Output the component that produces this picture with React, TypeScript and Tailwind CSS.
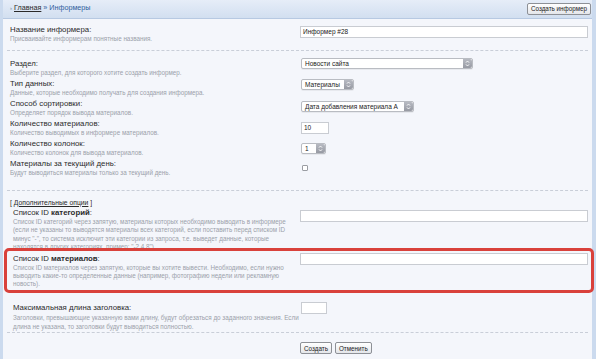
import React from 'react';

// --- Small controls ---

function Chevrons() {
  return (
    <svg width="5" height="7" viewBox="0 0 5 7" className="block">
      <path d="M1 2.6 L2.5 1 L4 2.6 M1 4.4 L2.5 6 L4 4.4" stroke="#fff" strokeWidth="0.9" fill="none" />
    </svg>
  );
}

function Select({ value, width }: { value: string; width: string }) {
  return (
    <div className={`${width} h-[11px] flex items-stretch bg-white border border-[#b9bcc2] rounded-[2px] shadow-[0_1px_0_rgba(0,0,0,0.05)]`}>
      <div className="flex-1 text-[6.5px] leading-[9px] pl-[3px] text-[#222] whitespace-nowrap overflow-hidden">{value}</div>
      <div className="w-[9px] bg-gradient-to-b from-[#b7bac2] to-[#979aa3] rounded-r-[2px] flex items-center justify-center">
        <Chevrons />
      </div>
    </div>
  );
}

function TextInput({ width, value }: { width: string; value?: string }) {
  return (
    <div className={`${width} h-[12px] bg-white border border-[#c9ccd2] text-[6.5px] leading-[10px] pl-[2px] text-[#222] whitespace-nowrap`}>
      {value}
    </div>
  );
}

function Button({ children, className = '' }: { children: React.ReactNode; className?: string }) {
  return (
    <div className={`h-[12px] px-[3px] flex items-center border border-[#8d9096] rounded-[2px] bg-gradient-to-b from-white to-[#e4e6ea] text-[6.3px] text-[#222] whitespace-nowrap ${className}`}>
      {children}
    </div>
  );
}

// --- Rows ---

function Label({ children }: { children: React.ReactNode }) {
  return <div className="text-[7.8px] leading-[10px] text-[#2b2b2b] whitespace-nowrap">{children}</div>;
}

function Desc({ children, lh = 'leading-[8.5px]' }: { children: React.ReactNode; lh?: string }) {
  return <div className={`text-[6.3px] ${lh} text-[#9ba1aa] whitespace-nowrap`}>{children}</div>;
}

const SECTION_ROWS = [
  { label: 'Раздел:', desc: 'Выберите раздел, для которого хотите создать информер.', control: <Select value="Новости сайта" width="w-[172px]" />, mt: 'mt-[-1px]' },
  { label: 'Тип данных:', desc: 'Данные, которые необходимо получать для создания информера.', control: <Select value="Материалы" width="w-[53px]" />, mt: 'mt-0' },
  { label: 'Способ сортировки:', desc: 'Определяет порядок вывода материалов.', control: <Select value="Дата добавления материала А" width="w-[113px]" />, mt: 'mt-[2px]' },
  { label: 'Количество материалов:', desc: 'Количество выводимых в информере материалов.', control: <TextInput width="w-[28px]" value="10" />, mt: 'mt-[3px]' },
  { label: 'Количество колонок:', desc: 'Количество колонок для вывода материалов.', control: <Select value="1" width="w-[25px]" />, mt: 'mt-[4px]' },
  {
    label: 'Материалы за текущий день:',
    desc: 'Будут выводиться материалы только за текущий день.',
    control: <div className="w-[6px] h-[6px] bg-white border border-[#9a9da3] rounded-[1px] ml-[1px]" />,
    mt: 'mt-[6px]',
  },
];

export default function App() {
  return (
    <div className="relative w-[600px] h-[359px] overflow-hidden bg-white font-['Liberation_Sans',Arial,sans-serif]">
      <div className="mr-[4px] h-full border-l-[3px] border-r-[4px] border-[#cbdaee] bg-[#f4f6fb]">
        {/* Header */}
        <div className="h-[19px] flex items-center justify-between pl-[7px] pr-[1px] bg-gradient-to-b from-[#e6edf8] to-[#d2dff0] border-b border-[#b7c9e2]">
          <div className="flex items-center gap-[2px] text-[7.2px] text-[#2f5e9d] -mt-[1px]">
            <span className="text-[#7a8596] text-[6px]">›</span>
            <span className="text-[#2a2a2a] underline">Главная</span>
            <span>»</span>
            <span>Информеры</span>
          </div>
          <Button className="w-[64px] justify-center">Создать информер</Button>
        </div>

        {/* Name */}
        <div className="mx-[4px] pt-[6px] pb-[6px] pl-[3px] flex border-b border-dashed border-[#c9ced8]">
          <div className="w-[291px]">
            <Label>Название информера:</Label>
            <Desc>Присваивайте информерам понятные названия.</Desc>
          </div>
          <div className="mt-[1px]">
            <TextInput width="w-[288px]" value="Информер #28" />
          </div>
        </div>

        {/* Main options */}
        <div className="mx-[4px] pt-[8px] pb-[10px] pl-[3px] border-b border-dashed border-[#c9ced8]">
          {SECTION_ROWS.map((row) => (
            <div key={row.label} className="h-[20.2px] flex">
              <div className="w-[291px]">
                <Label>{row.label}</Label>
                <Desc>{row.desc}</Desc>
              </div>
              <div className={row.mt}>{row.control}</div>
            </div>
          ))}
        </div>

        {/* Extra options */}
        <div className="mx-[4px] pt-[7px] pl-[3px] border-b border-dashed border-[#c9ced8] pb-[1px]">
          <div className="text-[6.8px] leading-[10px] text-[#2a2a2a]">
            [ <span className="underline">Дополнительные опции</span> ]
          </div>

          <div className="flex pl-[3px]">
            <div className="w-[288px]">
              <Label>Список ID <b>категорий</b>:</Label>
              <Desc>
                Список ID категорий через запятую, материалы которых необходимо выводить в информере<br />
                (если не указаны то выводятся материалы всех категорий, если поставить перед списком ID<br />
                минус "-", то система исключит эти категории из запроса, т.е. выведет данные, которые<br />
                находятся в других категориях, пример: "-2,4,8")
              </Desc>
            </div>
            <div className="mt-[2px]">
              <TextInput width="w-[288px]" />
            </div>
          </div>

          <div className="flex pl-[3px] mt-[2px]">
            <div className="w-[288px]">
              <Label>Список ID <b>материалов</b>:</Label>
              <Desc lh="leading-[8.2px]">
                Список ID материалов через запятую, которые вы хотите вывести. Необходимо, если нужно<br />
                выводить какие-то определенные данные (например, фотографию недели или рекламную<br />
                новость).
              </Desc>
            </div>
            <div className="mt-[-1px]">
              <TextInput width="w-[288px]" />
            </div>
          </div>

          <div className="flex pl-[3px] mt-[15px]">
            <div className="w-[288px]">
              <Label>Максимальная длина заголовка:</Label>
              <Desc lh="leading-[9px]">
                Заголовки, превышающие указанную вами длину, будут обрезаться до заданного значения. Если<br />
                длина не указана, то заголовки будут выводиться полностью.
              </Desc>
            </div>
            <div className="mt-[-1px]">
              <TextInput width="w-[26px]" />
            </div>
          </div>
        </div>

        {/* Actions */}
        <div className="flex gap-[3px] pl-[297px] pt-[9px]">
          <Button>Создать</Button>
          <Button>Отменить</Button>
        </div>
      </div>

      {/* Highlight annotation */}
      <div className="absolute left-[4px] top-[248px] w-[590px] h-[45px] border-[3px] border-[#d9413b] rounded-[5px] pointer-events-none" />
    </div>
  );
}
